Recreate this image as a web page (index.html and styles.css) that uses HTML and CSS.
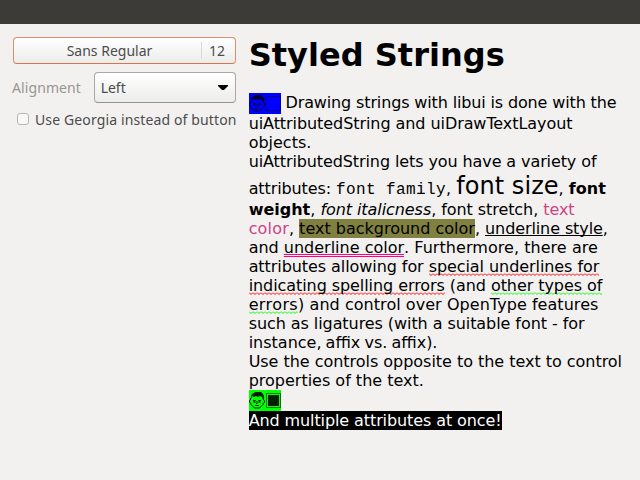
FILE: index.html
```html
<!DOCTYPE html>
<html lang="en">
<head>
<meta charset="utf-8">
<title>Styled Strings</title>
<link rel="stylesheet" href="styles.css">
</head>
<body>
<svg width="0" height="0" class="defs"><defs>
<g id="boy"><path d="M2 9V6l1-2 2-1 1-1h6l2 2 1 2v4h-1l-1-3-2-1-2 1-2-1-2 1-2-1-1 3z"/><g fill="none" stroke="currentColor"><path d="M1.500 8v2l-1 .5v2l1.500 1v1l3.500 3.500h5l3.500-3.500v-1l1.500-1v-2l-1-.5V8M4 10.500h2.500M9.500 10.500H12M8 11v2.500H7M6 15.500h4"/><path d="M4.500 12h2M9.500 12h2" stroke-width="1.500"/></g></g>
</defs></svg>
<header class="menubar"></header>
<main class="content">
<form class="controls">
<button type="button" class="font-button"><span class="font-name">Sans Regular</span><span class="font-points">12</span></button>
<div class="row"><span class="label">Alignment</span><button type="button" class="combo"><span>Left</span><svg width="10" height="5" viewBox="0 0 10 5"><path d="M0 0h10v1L6 5H4L0 1z"/></svg></button></div>
<label class="check"><span class="box"></span><span class="check-text">Use Georgia instead of button</span></label>
</form>
<article class="text">
<h1>Styled Strings</h1>
<p class="line emoji-line tight-3"><span class="emoji blue"><svg width="32" height="21" viewBox="0 0 32 21" fill="currentColor"><use href="#boy"/><path fill="none" stroke="currentColor" stroke-opacity=".6" d="M17 3.500h14.500v14H16.500v-14z"/></svg></span> Drawing strings with libui is done with the</p>
<p class="line tight-1">uiAttributedString and uiDrawTextLayout</p>
<p class="line">objects.</p>
<p class="line tight-2">uiAttributedString lets you have a variety of</p>
<p class="line tall"><span class="tight-2">attributes: </span><span class="mono">font family</span>, <span class="large">font size</span>, <b class="shift">font</b></p>
<p class="line"><b>weight</b>, <span class="tight-1"><i>font italicness</i>, font stretch, <span class="pink">text</span></span></p>
<p class="line"><span class="pink loose-2">color</span>, <span class="olive">text background color</span>, <span class="tight-2"><span class="under">underline style</span>,</span></p>
<p class="line">and <span class="double">underline color</span><span class="loose-1">. Furthermore, there are</span></p>
<p class="line"><span class="tight-1">attributes allowing for </span><span class="wave red tight-1">special underlines for</span></p>
<p class="line tight-1"><span class="wave red">indicating spelling errors</span> (and <span class="wave green">other types of</span></p>
<p class="line"><span class="wave green loose-3">errors</span><span class="loose-1">) and control over OpenType features</span></p>
<p class="line tight-1">such as ligatures (with a suitable font - for</p>
<p class="line tight-words">instance, affix vs. affix).</p>
<p class="line tight-0">Use the controls opposite to the text to control</p>
<p class="line">properties of the text.</p>
<p class="line emoji-line"><span class="emoji lime"><svg width="32" height="21" viewBox="0 0 32 21" fill="currentColor"><use href="#boy"/><path d="M19 5h11v11H19z"/><path fill="none" stroke="currentColor" stroke-opacity=".6" d="M17 3.500h14.500v14H17.500v-14z"/></svg></span></p>
<p class="line"><span class="inverse tight-2">And multiple attributes at once!</span></p>
</article>
</main>
</body>
</html>
```
FILE: styles.css
```css
* { box-sizing: border-box; }
body { margin: 0; height: 480px; overflow: hidden; background: #f2f1f0; color: #000; font: 16px/19px "DejaVu Sans", sans-serif; }
.defs { display: none; }
.menubar { height: 24px; background: #3c3b37; }
.content { display: flex; padding: 13px 12px 0; }
.controls { width: 225px; margin-right: 12px; color: #4c4c4c; font: 14px/20px "Noto Sans", sans-serif; }
button { font: inherit; color: inherit; background: linear-gradient(#fff, #ececeb); border: 1px solid #aaa8a5; border-bottom-color: #969492; border-radius: 4px; padding: 0; }
.font-button { display: flex; align-items: center; width: 223px; height: 27px; margin-left: 1px; border-color: #e08d6c; border-bottom-color: #d27650; }
.font-name { flex: 1; text-align: center; padding-left: 4px; }
.font-points { width: 34px; height: 17px; line-height: 17px; padding-left: 7px; text-align: left; border-left: 1px solid #d8d7d6; }
.row { display: flex; align-items: center; justify-content: space-between; height: 31px; margin-top: 8px; padding-right: 1px; }
.label { color: #989693; letter-spacing: .1px; }
.combo { display: flex; align-items: center; justify-content: space-between; width: 142px; height: 31px; padding: 0 7px 0 6px; }
.check { display: flex; align-items: center; height: 20px; margin-top: 6px; padding-left: 5px; white-space: nowrap; }
.check-text { letter-spacing: .13px; padding-top: 2px; }
.box { width: 12px; height: 12px; margin-right: 6px; border: 1px solid #b8b5b2; border-radius: 3px; background: #f8f8f7; }
.text { width: 380px; white-space: nowrap; }
h1 { margin: 0 0 18px; height: 38px; font-size: 32px; line-height: 37px; letter-spacing: .03px; }
.line { margin: 0; height: 19px; }
.emoji-line { height: 21px; }
.emoji { display: inline-block; height: 21px; vertical-align: top; }
.emoji svg { display: block; }
.blue { background: #00f; color: #000030; }
.lime { background: #0f0; color: #002000; }
.tall { height: 29px; line-height: 31px; }
.mono { font-family: "Liberation Mono", monospace; letter-spacing: .4px; }
.large { font-size: 24px; letter-spacing: .05px; }
.shift { letter-spacing: .05px; }
.pink { color: #cc4488; }
.olive { display: inline-block; background: #808040; }
.under { text-decoration: underline 1px; text-decoration-skip-ink: none; text-underline-offset: 1px; }
.double { text-decoration: underline double 1px #ff0080; text-decoration-skip-ink: none; text-underline-offset: 1px; }
.wave { display: inline-block; height: 19px; background-repeat: repeat-x; background-position: 0 16px; background-size: 4px 3px; }
.red { background-image: url("data:image/svg+xml,%3Csvg xmlns='http://www.w3.org/2000/svg' width='4' height='3'%3E%3Cpath d='M0 .5L2 2.500L4 .5' fill='none' stroke='%23f00'/%3E%3C/svg%3E"); }
.green { background-image: url("data:image/svg+xml,%3Csvg xmlns='http://www.w3.org/2000/svg' width='4' height='3'%3E%3Cpath d='M0 .5L2 2.500L4 .5' fill='none' stroke='%230f0'/%3E%3C/svg%3E"); }
.inverse { display: inline-block; background: #000; color: #fff; }
.tight-0 { letter-spacing: -.03px; }
.tight-1 { letter-spacing: -.07px; }
.tight-2 { letter-spacing: -.1px; }
.tight-3 { letter-spacing: -.14px; }
.tight-words { word-spacing: -1px; }
.loose-1 { letter-spacing: .05px; }
.loose-2 { letter-spacing: .18px; }
.loose-3 { letter-spacing: .4px; }
```
